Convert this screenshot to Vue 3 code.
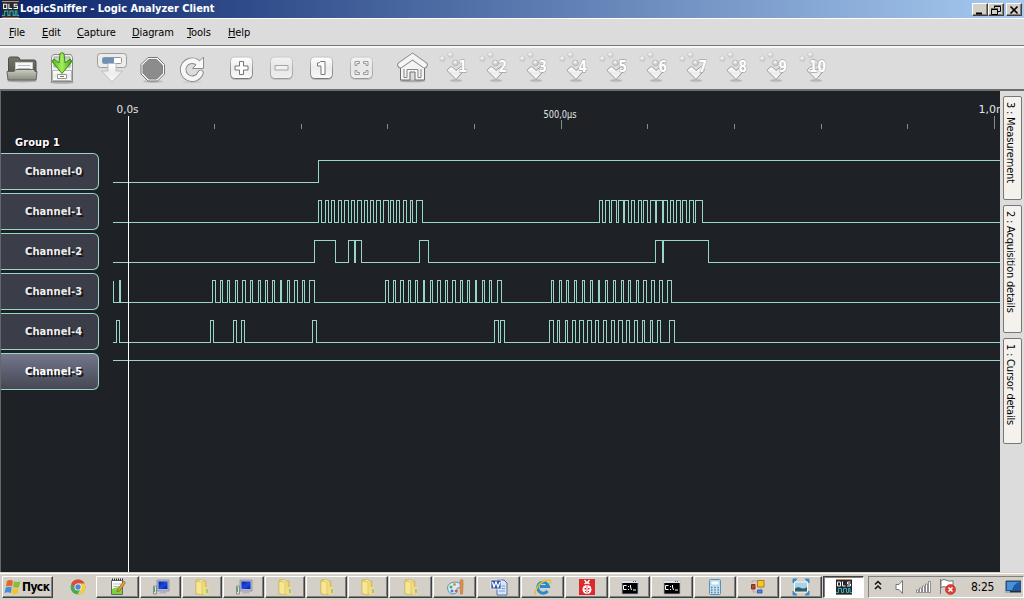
<script setup>
const menus = [
  { label: 'File', w: 34 }, { label: 'Edit', w: 35 }, { label: 'Capture', w: 55 },
  { label: 'Diagram', w: 55 }, { label: 'Tools', w: 41 }, { label: 'Help', w: 38 },
]
const groups = [
  { name: 'files', items: ['open', 'save'] },
  { name: 'capture', items: ['capture', 'stop', 'repeat'] },
  { name: 'zoom', items: ['plus', 'minus', 'one', 'fit'] },
  { name: 'home', items: ['home'] },
  { name: 'marks', items: [1, 2, 3, 4, 5, 6, 7, 8, 9, 10] },
]
const isSquare = (i) => ['plus', 'minus', 'one', 'fit'].includes(i)
const faded = (i) => i === 'minus' || i === 'fit'

const channels = [
  [[318, 1001]],
  [[318, 321], [325, 328], [331, 334], [338, 341], [344, 348], [351, 354], [357, 361], [364, 367], [370, 373], [376, 380], [383, 388], [390, 393], [396, 399], [403, 406], [410, 412], [416, 422],
    [599, 602], [605, 609], [611, 616], [618, 623], [624, 628], [631, 634], [638, 641], [643, 647], [650, 655], [656, 662], [663, 667], [670, 673], [676, 680], [682, 686], [689, 693], [695, 702]],
  [[314, 335], [348, 354], [355, 361], [419, 428], [655, 662], [663, 708]],
  [[113, 113], [119, 120], [212, 215], [220, 222], [227, 229], [235, 237], [242, 245], [250, 252], [258, 260], [265, 267], [272, 274], [280, 281], [287, 289], [294, 297], [302, 304], [309, 314],
    [385, 388], [393, 395], [400, 403], [408, 410], [415, 417], [423, 424], [430, 432], [437, 440], [445, 447], [452, 455], [460, 462], [467, 469], [475, 476], [482, 484], [489, 491], [497, 501],
    [551, 553], [559, 561], [566, 568], [574, 576], [582, 584], [590, 592], [598, 599], [605, 607], [613, 615], [621, 623], [628, 630], [636, 638], [643, 646], [651, 654], [659, 662], [667, 671]],
  [[116, 119], [210, 213], [233, 236], [241, 244], [312, 316], [494, 498], [500, 504], [549, 553], [557, 559], [565, 567], [572, 575], [579, 583], [587, 591], [595, 598], [603, 606], [611, 614], [618, 622], [626, 629], [634, 637], [642, 644], [650, 652], [657, 660], [669, 674]],
  [[100, 1001]],
]
const trace = (pulses, i) => {
  const hi = 160.5 + i * 40
  const lo = hi + 22
  if (pulses[0][0] < 113) return 'M113 360.5H1001'
  let d = `M113 ${lo}`
  for (const [a, b] of pulses) d += `H${a + 0.5}V${hi}H${b + 0.5}V${b > 1000 ? hi : lo}`
  const last = pulses[pulses.length - 1][1]
  return last > 1000 ? d : d + 'H1001'
}
const ticks = [214, 301, 387, 474, 647, 734, 821, 907]
const tabs = [
  { label: '3 : Measurement', cls: 't3' },
  { label: '2 : Acquisition details', cls: 't2' },
  { label: '1 : Cursor details', cls: 't1' },
]
const tasks = ['note', 'pc', 'folder', 'pc', 'folder', 'folder', 'folder', 'folder', 'paint', 'word', 'ie', 'bug', 'cmd', 'cmd', 'calc', 'blocks', 'image', 'ols']
</script>

<template>
  <div class="window">
    <svg class="defs" width="0" height="0">
      <defs>
        <linearGradient id="pale" x1="0" y1="0" x2="0" y2="1"><stop offset="0" stop-color="#fff" /><stop offset=".5" stop-color="#ececec" /><stop offset="1" stop-color="#fafafa" /></linearGradient>
        <linearGradient id="edge" x1="0" y1="0" x2="0" y2="1"><stop offset="0" stop-color="#c4c4c4" /><stop offset="1" stop-color="#777" /></linearGradient>
        <linearGradient id="olive" x1="0" y1="0" x2="0" y2="1"><stop offset="0" stop-color="#74786b" /><stop offset="1" stop-color="#55584e" /></linearGradient>
        <linearGradient id="tray" x1="0" y1="0" x2="0" y2="1"><stop offset="0" stop-color="#c9ccc0" /><stop offset="1" stop-color="#8b8e82" /></linearGradient>
        <linearGradient id="green" x1="0" y1="0" x2="1" y2="0"><stop offset="0" stop-color="#4cb81c" /><stop offset=".5" stop-color="#a6ef5c" /><stop offset="1" stop-color="#3ca512" /></linearGradient>
        <linearGradient id="gold" x1="0" y1="0" x2="1" y2="0"><stop offset="0" stop-color="#d9bd52" /><stop offset=".5" stop-color="#fbf0a4" /><stop offset="1" stop-color="#e2c75c" /></linearGradient>
        <linearGradient id="screen" x1="0" y1="0" x2="1" y2="1"><stop offset="0" stop-color="#0a1fa8" /><stop offset=".55" stop-color="#1c49e0" /><stop offset="1" stop-color="#0b1a90" /></linearGradient>
        <radialGradient id="ball" cx=".4" cy=".3"><stop offset="0" stop-color="#fff" /><stop offset="1" stop-color="#cdcdcd" /></radialGradient>
        <symbol id="ols" viewBox="0 0 16 16">
          <rect width="16" height="16" fill="#25282c" /><rect width="16" height="1" fill="#c98a55" /><rect y="15" width="16" height="1" fill="#8b6c55" />
          <path d="M1.500 3h3v4h-3zM6.500 2.500v4.500h3M14.500 3h-3v2h3v2h-3.500" fill="none" stroke="#f4f4f4" />
          <path d="M0 13.500h2.500v-4h3v4h2v-4h3v4h2v-4h1.500v4h2" fill="none" stroke="#35a9b5" />
        </symbol>
      </defs>
    </svg>

    <header class="titlebar">
      <svg class="app-icon" width="17" height="17"><use href="#ols" /></svg>
      <span class="title">LogicSniffer - Logic Analyzer Client</span>
      <div class="controls">
        <svg width="16" height="13" class="ctl"><path d="M3 9.500h6" stroke="#000" stroke-width="2" /></svg>
        <svg width="16" height="13" class="ctl"><path d="M5.500 4V2.500h6v5H9M5 2h7M2.500 5.500h6v5h-6zM2 5h7" fill="none" stroke="#000" /></svg>
        <svg width="16" height="13" class="ctl last"><path d="M3.500 2.500l7 7M10.500 2.500l-7 7" stroke="#000" stroke-width="1.600" /></svg>
      </div>
    </header>

    <nav class="menubar">
      <span v-for="m in menus" :key="m.label" :class="['menu', m.label.toLowerCase()]"><u>{{ m.label[0] }}</u>{{ m.label.slice(1) }}</span>
    </nav>

    <div class="toolbar">
      <div v-for="g in groups" :key="g.name" :class="['group', g.name]">
        <svg v-for="i in g.items" :key="i" width="40" height="40" viewBox="0 0 40 40">
          <g v-if="i === 'open'">
            <ellipse cx="20" cy="33" rx="15" ry="1.500" fill="#aaa" />
            <path d="M6.500 25V11q0-2 2-2h7q2 0 2.500 3h14q2 0 2 2v11z" fill="url(#olive)" stroke="#4c4f46" />
            <path d="M13.500 14.500h17v11h-17z" fill="#f7f7f7" stroke="#ccc" /><path d="M16 17.500h12M16 20.500h12" stroke="#bbb" />
            <path d="M5 23.500h7l2-2h18l1 2h2l-1 8.500H6z" fill="url(#tray)" stroke="#60645a" />
          </g>
          <g v-else-if="i === 'save'">
            <ellipse cx="20" cy="34.500" rx="12" ry="1.300" fill="#aaa" />
            <path d="M12 6.500h16q2 0 2.500 3v24h-21v-24q.5-3 2.500-3z" fill="#f0f0ed" stroke="#888b83" />
            <path d="M12 9h16v10H12z" fill="#cfd1ca" stroke="#a5a8a0" />
            <path d="M10.500 22.500h19v10h-19z" fill="url(#pale)" stroke="#b5b8b0" />
            <path d="M15.500 26.500h9v4h-9z" fill="#fff" stroke="#91958b" /><path d="M18 28.500h4" stroke="#777" />
            <path d="M18 5.500q2-1.500 4 0l1 9.500 5-4q2 1 1.500 3L20 25.500 10.500 14q-.5-2 1.500-3l5 4z" fill="url(#green)" stroke="#378b10" />
          </g>
          <g v-else-if="i === 'capture'">
            <rect x="5.500" y="5.500" width="29" height="14" rx="3" fill="#ececea" stroke="#999d96" />
            <rect x="10.500" y="9.500" width="19" height="6" rx="1" fill="#fff" stroke="#8a98a5" /><path d="M11 10h11v5H11z" fill="#6b92bd" />
            <path d="M16 15.500h8V23h6.500L20 34 9.500 23H16z" fill="url(#pale)" stroke="#bdbdbd" />
          </g>
          <g v-else-if="i === 'stop'">
            <ellipse cx="21" cy="33.500" rx="10" ry="1.500" fill="#bbb" />
            <path d="M16 9.500h9.500l7 7v9.500l-7 7H16l-7-7v-9.500z" fill="#fafafa" stroke="#777" />
            <path d="M16.800 11.500h7.900l5.800 5.800v7.900l-5.800 5.800h-7.900L11 25.200v-7.900z" fill="#8c8c8c" stroke="#808080" />
          </g>
          <g v-else-if="i === 'repeat'">
            <ellipse cx="20" cy="34" rx="10" ry="1.200" fill="#ccc" />
            <path d="M28.500 25A9 9 0 1 1 24.500 13.800" fill="none" stroke="#8b8b8b" stroke-width="6.500" stroke-linecap="round" />
            <path d="M31.500 9v11.500H20.500l3.500-3.700 4-4.300z" fill="#fafafa" stroke="#8b8b8b" />
            <path d="M28.500 25A9 9 0 1 1 24.500 13.800L26.500 15.500" fill="none" stroke="#f7f7f7" stroke-width="4.600" stroke-linecap="round" />
          </g>
          <g v-else-if="isSquare(i)" :opacity="faded(i) ? .65 : 1">
            <rect x="10" y="12" width="21" height="20" rx="4" fill="#888" opacity=".4" />
            <rect x="9.500" y="9" width="22" height="21.500" rx="4" fill="url(#pale)" stroke="url(#edge)" />
            <path v-if="i === 'plus'" d="M18.500 13.500h4v4.500h4.500v4h-4.500v4.500h-4V22H14v-4h4.500z" fill="#fff" stroke="#777" />
            <path v-else-if="i === 'minus'" d="M14 17.500h13v4.500H14z" fill="#fff" stroke="#888" />
            <path v-else-if="i === 'one'" d="M19.500 13.500h4.500v13h-4V18h-3.500v-3q2.500 0 3-1.500z" fill="#fff" stroke="#777" />
            <path v-else d="M14 17.500v-4h4.500v2H16v2zM22.500 13.500H27v4h-2v-2h-2.500zM14 22.500v4h4.500v-2H16v-2zM22.500 26.500H27v-4h-2v2h-2.500z" fill="#fff" stroke="#777" />
          </g>
          <g v-else-if="i === 'home'">
            <ellipse cx="20.500" cy="33" rx="13" ry="1.300" fill="#aaa" />
            <path d="M8.500 18L20.500 9l12 9v14H23v-8h-5v8H8.500z" fill="#f4f4f4" stroke="#6e6e6e" />
            <path d="M12 21v8.500h3v-8h11v8h3V21" fill="none" stroke="#858585" />
            <path d="M8.500 17L20.500 8.500 32.500 17" fill="none" stroke="#8b8b8b" stroke-width="6.500" stroke-linecap="round" />
            <path d="M8.500 17L20.500 8.500 32.500 17" fill="none" stroke="#f5f5f5" stroke-width="4.700" stroke-linecap="round" />
          </g>
          <g v-else>
            <ellipse cx="20" cy="32.500" rx="6" ry="1.300" fill="#b5b5b5" />
            <circle cx="6.500" cy="10.800" r="2.800" fill="url(#ball)" stroke="#c8c8c8" stroke-width=".6" />
            <circle cx="14.500" cy="7" r="2.800" fill="url(#ball)" stroke="#c8c8c8" stroke-width=".6" />
            <circle cx="19.500" cy="15" r="2.800" fill="url(#ball)" stroke="#aaa" stroke-width=".7" />
            <path d="M11.500 21.500l3-2.500q1-.5 2 0l3.500 3.500 5-4 3 2.500q.5 1-.5 2L20 31.500l-8.500-8.500q-.5-1 0-1.500z" fill="url(#pale)" stroke="#999" />
            <text :x="i === 10 ? 13 : 22.500" y="23.500" :textLength="i === 10 ? 17 : 8.500" lengthAdjust="spacingAndGlyphs" class="digit">{{ i }}</text>
          </g>
        </svg>
      </div>
    </div>

    <main class="body">
      <section class="plot">
        <div class="labels">
          <div class="group-name">Group 1</div>
          <div v-for="(c, n) in channels" :key="n" :class="['channel', { active: n === 5 }]"><span>Channel-{{ n }}</span></div>
        </div>
        <svg class="waves" width="887" height="481" viewBox="113 91 887 481" shape-rendering="crispEdges">
          <path v-for="t in ticks" :key="t" :d="`M${t + .5} 124v5`" class="tick" />
          <path d="M561.500 120v9M994.500 116v13" class="tick" />
          <g class="scale">
            <text x="116.500" y="113" textLength="22" lengthAdjust="spacingAndGlyphs">0,0s</text>
            <text x="543.500" y="118" textLength="33" lengthAdjust="spacingAndGlyphs" class="mid">500,0µs</text>
            <text x="978.500" y="113" textLength="34" lengthAdjust="spacingAndGlyphs">1,0ms</text>
          </g>
          <path v-for="(c, n) in channels" :key="n" :d="trace(c, n)" class="wave" />
          <path d="M128.500 116V572" class="cursor" />
        </svg>
      </section>
      <aside class="tabs">
        <div v-for="t in tabs" :key="t.label" :class="['tab', t.cls]"><span>{{ t.label }}</span></div>
      </aside>
    </main>

    <footer class="taskbar">
      <div class="start">
        <svg width="17" height="16" viewBox="0 0 17 16">
          <path d="M3 2q3-2 6 0L8 7.500q-3-1.500-6 0z" fill="#e8632a" /><path d="M10 2.300q3 1.500 6.500 0L15 8q-3 1.500-6 0z" fill="#86bd3a" />
          <path d="M1.800 8.500q3-1.500 6 0l-1 5.500q-3-1.500-6.300 0z" fill="#438fd4" /><path d="M8.800 9q3 1.500 6 0l-1.300 5.500q-3 1.500-5.800 0z" fill="#f6c12e" />
        </svg>
        <b>Пуск</b>
      </div>
      <svg class="chrome" width="16" height="16" viewBox="0 0 16 16">
        <circle cx="8" cy="8" r="7.500" fill="#4aa955" /><path d="M1.400 4.400A7.500 7.500 0 0 1 14.600 4.400H8L5 9.500z" fill="#df4b3d" /><path d="M14.600 4.400A7.500 7.500 0 0 1 7.500 15.500L11 9.500 8 4.400z" fill="#f7cd46" />
        <circle cx="8" cy="8" r="3.600" fill="#f5f5f5" /><circle cx="8" cy="8" r="2.700" fill="#4b86d8" />
      </svg>
      <div class="tasks">
        <div v-for="(t, n) in tasks" :key="n" :class="['task', { pressed: t === 'ols' }]">
          <svg width="18" height="18" viewBox="0 0 18 18">
            <g v-if="t === 'note'"><path d="M2.500 2.500h11v14h-11z" fill="#fff" stroke="#666" /><path d="M3 1.500h11" stroke="#333" stroke-width="2" stroke-dasharray="1 1" /><path d="M4 6h8M4 8.500h7" stroke="#bbb" /><path d="M3 11q5-3 10-1v6H3z" fill="#7bd43e" /><path d="M8.500 12l6-9 2 1.500-6 8.500-2.500 1z" fill="#e9a52b" stroke="#8b5720" stroke-width=".7" /></g>
            <g v-else-if="t === 'pc'"><path d="M1.500 8h3v8h-3z" fill="#d9e0df" stroke="#777b7c" stroke-width=".8" /><path d="M2 9h1v5H2z" fill="#4aaa55" /><path d="M5 2h12v11H5z" fill="#b5bbcc" stroke="#8087a0" stroke-width=".7" /><path d="M6.500 3.500h9v7.500h-9z" fill="url(#screen)" /><path d="M9 13h4l2 2.500H7z" fill="#aeb4c2" /></g>
            <g v-else-if="t === 'folder'"><path d="M3 3q0-1.500 1-1.500h5l1 1.500h3v13H3z" fill="url(#gold)" stroke="#cbae4b" stroke-width=".6" /><path d="M3 3l6 1v13l-6-1.500z" fill="#f7e793" stroke="#ceb253" stroke-width=".6" /><path d="M10 9h5.500v7.500H10z" fill="#f3dc7d" /><path d="M13.500 11h1v4h-1z" fill="#5ba4bd" /></g>
            <g v-else-if="t === 'paint'"><path d="M1.500 10q0-5 7-6 6 0 7 4 0 2-4 2-2 1 0 3-1 3-5 3t-5-6z" fill="#d7eaf5" stroke="#6292b8" /><circle cx="5" cy="9" r="1.500" fill="#51ad46" /><circle cx="8.500" cy="6.500" r="1.400" fill="#e58b35" /><circle cx="6" cy="13" r="1.500" fill="#487ddc" /><circle cx="10" cy="13" r="1.300" fill="#dc5547" /><path d="M14 8V2.500l1.500-1.500 1.500 1.500V8l-.5 8h-2z" fill="#df9148" stroke="#af632c" stroke-width=".5" /></g>
            <g v-else-if="t === 'word'"><path d="M7 2h7l3 3v12H7z" fill="#d7e4f6" stroke="#4d72ab" /><path d="M9 8h6M9 10.500h6M9 13h6" stroke="#779dcc" /><path d="M1 2h10v9H1z" fill="#2e58a6" stroke="#fff" stroke-width=".7" /><path d="M2.500 4L4 9l2-5 2 5 2-5" fill="none" stroke="#fff" stroke-width="1.300" /></g>
            <g v-else-if="t === 'ie'"><path d="M13.500 13a5.500 5.500 0 1 1 1-4.500H6" fill="none" stroke="#288bca" stroke-width="3" /><path d="M2 15Q-1 18 3 10T15.500 2q2 .5.500 4" fill="none" stroke="#edbb32" stroke-width="1.600" /></g>
            <g v-else-if="t === 'bug'"><path d="M1 1h16v16H1z" fill="#dd292d" /><circle cx="9" cy="11.500" r="4.500" fill="#fff" /><path d="M6.500 6q2.500-2.500 5 0M6.500 2L9 5l2.500-3" fill="none" stroke="#fff" stroke-width="1.300" /><path d="M9 7v9" stroke="#dd292d" stroke-width=".7" /><path d="M6.500 10h1.500v1.500H6.500zM10 10h1.500v1.500H10zM7 13h1v1H7zM10 13h1v1h-1z" fill="#dd292d" /></g>
            <g v-else-if="t === 'cmd'"><path d="M1 3h16v13H1z" fill="#000" stroke="#aab" stroke-width=".8" /><path d="M1 3h16v2H1z" fill="#dce1e9" /><path d="M12 3.500h4" stroke="#555" stroke-dasharray="1 1" /><path d="M5.500 7.500h-3v4h3M7.500 8v1M7.500 11v1M9.500 7v2l1 3M12 12h3" fill="none" stroke="#fff" /></g>
            <g v-else-if="t === 'calc'"><rect x="3.500" y="1.500" width="11" height="15" rx="1" fill="#c8e3f1" stroke="#5b91b4" /><path d="M5 3h8v4H5z" fill="#f5fcff" stroke="#86b5cc" stroke-width=".5" /><path d="M5 9.500h8M5 12h8M5 14.500h8" stroke="#4686ae" stroke-width="1.400" stroke-dasharray="1.500 1.700" /></g>
            <g v-else-if="t === 'blocks'"><path d="M3 5V3h5M4 12v2h4M12 10v2" fill="none" stroke="#aaa" /><path d="M8.500 2.500h6.500v6.500H8.500z" fill="#f7c62d" stroke="#ae7b17" /><path d="M2.500 6.500h3.500v4.500H2.500z" fill="#c43f35" stroke="#842b27" /><path d="M8.500 12h4.500v3H8.500z" fill="#5284dc" stroke="#345da9" /></g>
            <g v-else-if="t === 'image'"><path d="M1 1h4L1 5zM17 1v4l-4-4zM17 17h-4l4-4zM1 17v-4l4 4z" fill="#3f8ccf" stroke="#3f8ccf" /><path d="M2.500 4h13v10h-13z" fill="#a4d5ec" stroke="#f7f7f7" /><path d="M3 10.500q3-2 6-.5t6-1V13.500H3z" fill="#315c68" /></g>
            <use v-else href="#ols" x="1" y="1" width="16" height="16" />
          </svg>
        </div>
      </div>
      <div class="tray">
        <svg width="102" height="22" viewBox="0 0 104 22" preserveAspectRatio="xMinYMid slice">
          <path d="M6 8.500l3-3 3 3M6 13l3-3 3 3" fill="none" stroke="#111" stroke-width="1.500" />
          <path d="M27 8.500h3l3.500-4v13l-3.500-4h-3z" fill="#fff" stroke="#777" />
          <path d="M47.500 14h2v2.500h-2zM50.500 12h2v4.500h-2zM53.500 10h2v6.500h-2zM56.500 8h2v8.500h-2zM59.500 5.500h2v11h-2z" fill="#fff" stroke="#777" stroke-width=".8" />
          <path d="M71.500 3v15M72 4.500q3-2 6 0 3 1.500 6 0v7q-3 1.500-6 0-3-2-6 0z" fill="#fff" stroke="#777" />
          <circle cx="81.500" cy="13.500" r="5" fill="#dd3f38" stroke="#a92723" stroke-width=".6" /><path d="M79.500 11.500l4 4M83.500 11.500l-4 4" stroke="#fff" stroke-width="1.500" />
        </svg>
        <span class="clock">8:25</span>
        <svg class="desk" width="16" height="14" viewBox="0 0 16 14"><path d="M1 1h15v10H1z" fill="#1e5aaa" stroke="#35495e" /><path d="M2 2h13q-6 1-8 8H2z" fill="#4b91d8" /><path d="M1 11h15v1.500H1z" fill="#242d38" /><path d="M0 12h5" stroke="#8cb3d6" stroke-width="2" /></svg>
      </div>
    </footer>
  </div>
</template>

<style>
html, body { margin: 0; overflow: hidden; }
</style>

<style scoped>
.window { width: 1024px; height: 600px; display: flex; flex-direction: column; background: #dcdcdc; color: #000; font-family: "DejaVu Sans Condensed", "DejaVu Sans", sans-serif; font-stretch: condensed; font-size: 11px; overflow: hidden; }
.defs { position: absolute; }
.titlebar { height: 18px; display: flex; align-items: center; background: linear-gradient(90deg, #0a246a, #a6caf0); flex: none; padding-left: 2px; }
.app-icon { flex: none; }
.title { color: #fff; font-weight: bold; margin-left: 1px; line-height: 18px; white-space: nowrap; letter-spacing: -.03px; }
.controls { margin-left: auto; display: flex; padding-right: 2px; }
.ctl { box-sizing: border-box; background: #d4d0c8; border: 1px solid; border-color: #fff #404040 #404040 #fff; box-shadow: inset -1px -1px #808080; }
.ctl.last { margin-left: 2px; }
.menubar { height: 28px; box-sizing: border-box; display: flex; border-top: 1px solid #fff; border-bottom: 1px solid #777; padding-left: 9px; line-height: 27px; flex: none; }
.menu { letter-spacing: -.1px; white-space: nowrap; }
.menu u { text-underline-offset: 1px; }
.file { width: 33px; } .edit { width: 35px; } .capture.menu { width: 55px; } .diagram { width: 55px; } .tools { width: 41px; }
.toolbar { height: 45px; box-sizing: border-box; border-top: 2px solid #f8f8f8; border-bottom: 2px solid #6d6d6d; display: flex; padding: 0 0 0 2px; flex: none; }
.group { display: flex; height: 40px; }
.group.capture { margin-left: 10px; } .zoom { margin-left: 9px; } .home { margin-left: 11px; } .marks { margin-left: 4px; }
.digit { font: bold 16px "DejaVu Sans", sans-serif; fill: #fff; stroke: #a8a8a8; stroke-width: 1.3px; paint-order: stroke; }
.body { flex: none; height: 481px; display: flex; }
.plot { width: 1000px; box-sizing: border-box; border-left: 1px solid #666; background: #1e2126; display: flex; flex: none; }
.labels { width: 112px; flex: none; }
.group-name { color: #fff; font-weight: bold; height: 20px; line-height: 20px; padding: 42px 0 0 14px; text-shadow: 1px 1px #000; letter-spacing: .1px; }
.channel { width: 98px; height: 37px; box-sizing: border-box; margin-bottom: 3px; border: 1px solid #98d6ca; border-left: 0; border-radius: 0 6px 6px 0; background: #3b3d49; color: #eee; font-weight: bold; line-height: 35px; padding-left: 24px; text-shadow: 2px 2px #15171c; letter-spacing: .12px; white-space: nowrap; }
.channel.active { background: linear-gradient(#73778b, #454753); color: #fff; }
.waves { flex: none; }
.tick { stroke: #888b8e; fill: none; }
.wave { stroke: #98d6ca; fill: none; }
.cursor { stroke: #fff; }
.scale { fill: #e4e4e4; font-size: 11px; }
.mid { font-size: 10px; }
.tabs { width: 24px; box-sizing: border-box; padding: 5px 2px 0 3px; display: flex; flex-direction: column; gap: 5px; }
.tab { box-sizing: border-box; width: 19px; border: 1px solid #777; border-radius: 2px; background: #f5f2ee; writing-mode: vertical-rl; line-height: 13px; padding: 5px 4px 0 0; white-space: nowrap; letter-spacing: -.2px; }
.t3 { height: 104px; } .t2 { height: 128px; } .t1 { height: 106px; }
.taskbar { height: 28px; box-sizing: border-box; flex: none; background: #d4d0c8; border-top: 1px solid #d4d0c8; box-shadow: inset 0 1px #fff; display: flex; padding-top: 3px; }
.start { width: 51px; height: 22px; box-sizing: border-box; margin-left: 2px; display: flex; align-items: center; gap: 1px; border: 1px solid; border-color: #fff #404040 #404040 #fff; box-shadow: inset -1px -1px #808080; padding-left: 1px; }
.start b { font-size: 12px; letter-spacing: -.6px; }
.chrome { margin: 3px 0 0 17px; flex: none; }
.tasks { margin-left: 10px; display: grid; grid-template-columns: 44px 42px 41px 42px 41px 42px 41px 44px 44px 44px 44px 44px 42px 43px 43px 43px 43px 42px; flex: none; }
.task { height: 22px; box-sizing: border-box; margin-right: 1px; border: 1px solid; border-color: #fff #404040 #404040 #fff; box-shadow: inset -1px -1px #808080; display: flex; justify-content: center; align-items: center; }
.task.pressed { background: #fff; border-color: #404040 #fff #fff #404040; box-shadow: inset 1px 1px #808080; }
.tray { margin-left: auto; width: 156px; height: 22px; box-sizing: border-box; border: 1px solid; border-color: #808080 #fff #fff #808080; display: flex; align-items: center; flex: none; }
.clock { width: 25px; white-space: nowrap; font-size: 12px; letter-spacing: -.3px; }
.desk { margin-left: 9px; }
</style>
